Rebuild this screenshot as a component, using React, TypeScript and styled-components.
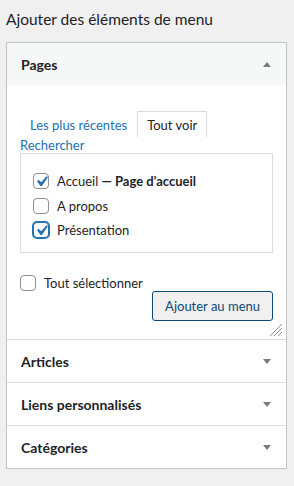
import React from 'react';
import styled, { createGlobalStyle, css } from 'styled-components';

const GlobalStyle = createGlobalStyle`
  html, body {
    margin: 0;
    padding: 0;
    background: #f0f0f1;
  }
  body {
    font-family: Lato, "Noto Sans", sans-serif;
    font-size: 13px;
    color: #1d2327;
  }
  * {
    box-sizing: border-box;
  }
`;

const pages = [
  { title: 'Accueil', state: 'Page d’accueil', checked: true, focused: false },
  { title: 'A propos', state: '', checked: false, focused: false },
  { title: 'Présentation', state: '', checked: true, focused: true },
];

const others = ['Articles', 'Liens personnalisés', 'Catégories'];

const Wrapper = styled.div`
  padding: 0 7px 0 6px;
`;

const Title = styled.h2`
  margin: 0;
  padding: 5px 0 0;
  height: 42px;
  font-size: 15.5px;
  font-weight: 400;
  line-height: 28px;
`;

const Panel = styled.div`
  background: #fff;
  border: 1px solid #c3c4c7;
  box-shadow: 0 1px 1px rgba(0, 0, 0, 0.04);
`;

const Section = styled.div`
  & + & {
    border-top: 1px solid #dcdcde;
  }
`;

const SectionHeader = styled.div<{ $open?: boolean }>`
  display: flex;
  align-items: center;
  justify-content: space-between;
  height: 42px;
  padding: 0 15px 0 14px;
  font-size: 14px;
  font-weight: 700;
  background: ${({ $open }) => ($open ? '#f6f7f7' : '#fff')};
`;

const Arrow = styled.span<{ $up?: boolean }>`
  width: 0;
  height: 0;
  border-left: 4px solid transparent;
  border-right: 4px solid transparent;
  ${({ $up }) =>
    $up
      ? css`border-bottom: 5px solid #787c82;`
      : css`border-top: 5px solid #787c82;`}
`;

const Body = styled.div`
  position: relative;
  padding: 26px 13px 18px;
`;

const TabRow = styled.div`
  display: flex;
  align-items: flex-end;
  height: 26px;
`;

const Tab = styled.span<{ $active?: boolean }>`
  display: flex;
  align-items: center;
  height: 26px;
  padding: 0 9px;
  color: ${({ $active }) => ($active ? '#1d2327' : '#2271b1')};
  border: 1px solid ${({ $active }) => ($active ? '#dcdcde' : 'transparent')};
  border-bottom: none;
`;

const SearchLink = styled.div`
  color: #2271b1;
  line-height: 16px;
`;

const ListBox = styled.div`
  border: 1px solid #dcdcde;
  padding: 15px 12px 10px;
  height: 100px;
`;

const Row = styled.label`
  display: flex;
  align-items: center;
  gap: 8px;
  height: 24.5px;
`;

const Box = styled.span<{ $focused?: boolean }>`
  position: relative;
  flex: none;
  width: 16px;
  height: 16px;
  border: 1px solid ${({ $focused }) => ($focused ? '#2271b1' : '#8c8f94')};
  border-radius: 4px;
  background: #fff;
  box-shadow: ${({ $focused }) => ($focused ? '0 0 0 1px #2271b1' : 'none')};

  svg {
    position: absolute;
    left: -3px;
    top: -3px;
  }
`;

const State = styled.span`
  font-weight: 700;
`;

const SelectAll = styled(Row)`
  margin-top: 22px;
  height: 16px;
`;

const Actions = styled.div`
  display: flex;
  justify-content: flex-end;
`;

const Button = styled.button`
  height: 30px;
  padding: 0 12px;
  font: inherit;
  font-size: 13px;
  color: #0a4b78;
  background: #f0f0f1;
  border: 1px solid #0a4b78;
  border-radius: 3px;
`;

const Grip = styled.svg`
  position: absolute;
  right: 3px;
  bottom: 2px;
`;

function Checkbox({ checked, focused }: { checked: boolean; focused?: boolean }) {
  return (
    <Box $focused={focused}>
      {checked && (
        <svg width="21" height="21" viewBox="0 0 20 20">
          <path
            fill="#2271b1"
            d="M14.83 4.89l1.34.94-5.81 8.38H9.02L5.78 9.67l1.34-1.25 2.57 2.4z"
          />
        </svg>
      )}
    </Box>
  );
}

export default function App() {
  return (
    <>
      <GlobalStyle />
      <Wrapper>
        <Title>Ajouter des éléments de menu</Title>
        <Panel>
          <Section>
            <SectionHeader $open>
              Pages
              <Arrow $up />
            </SectionHeader>
            <Body>
              <TabRow>
                <Tab>Les plus récentes</Tab>
                <Tab $active>Tout voir</Tab>
              </TabRow>
              <SearchLink>Rechercher</SearchLink>
              <ListBox>
                {pages.map((p) => (
                  <Row key={p.title}>
                    <Checkbox checked={p.checked} focused={p.focused} />
                    <span>
                      {p.title}
                      {p.state && <State> — {p.state}</State>}
                    </span>
                  </Row>
                ))}
              </ListBox>
              <SelectAll>
                <Checkbox checked={false} />
                Tout sélectionner
              </SelectAll>
              <Actions>
                <Button>Ajouter au menu</Button>
              </Actions>
              <Grip width="14" height="14" viewBox="0 0 14 14">
                <g stroke="#8c8f94" strokeWidth="1">
                  <line x1="13" y1="1" x2="1" y2="13" />
                  <line x1="13" y1="5" x2="5" y2="13" />
                  <line x1="13" y1="9" x2="9" y2="13" />
                </g>
              </Grip>
            </Body>
          </Section>
          {others.map((o) => (
            <Section key={o}>
              <SectionHeader>
                {o}
                <Arrow />
              </SectionHeader>
            </Section>
          ))}
        </Panel>
      </Wrapper>
    </>
  );
}
